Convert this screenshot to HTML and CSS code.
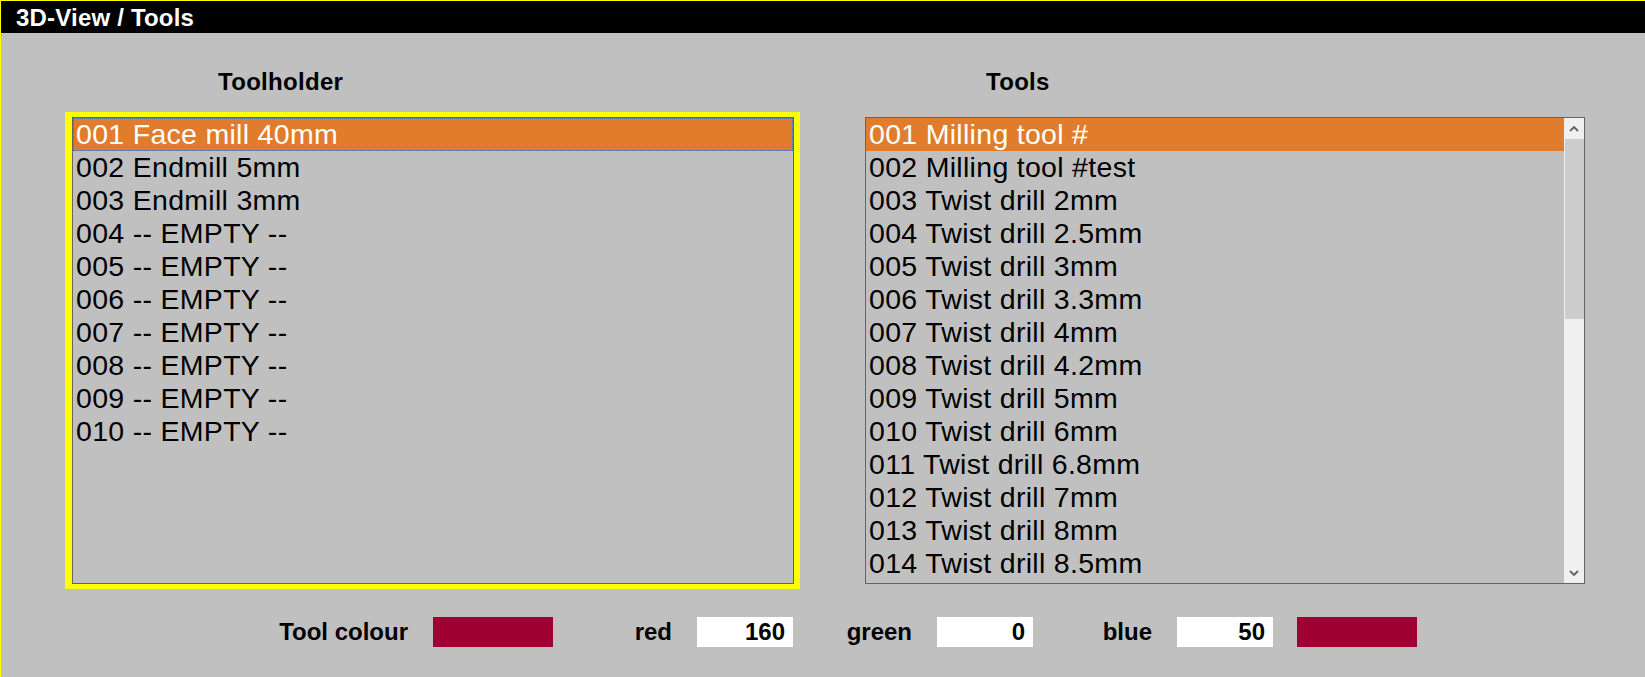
FILE: index.html
```html
<!DOCTYPE html>
<html lang="en">
<head>
<meta charset="utf-8">
<title>3D-View / Tools</title>
<link rel="stylesheet" href="styles.css">
</head>
<body>
<div class="window">
  <div class="titlebar">3D-View / Tools</div>
  <div class="content">
    <div class="columns">
      <section class="col col-holder">
        <h2 class="col-label">Toolholder</h2>
        <div class="focus-frame">
          <ul class="listbox">
            <li class="item selected focused">001 Face mill 40mm</li>
            <li class="item">002 Endmill 5mm</li>
            <li class="item">003 Endmill 3mm</li>
            <li class="item">004 -- EMPTY --</li>
            <li class="item">005 -- EMPTY --</li>
            <li class="item">006 -- EMPTY --</li>
            <li class="item">007 -- EMPTY --</li>
            <li class="item">008 -- EMPTY --</li>
            <li class="item">009 -- EMPTY --</li>
            <li class="item">010 -- EMPTY --</li>
          </ul>
        </div>
      </section>
      <section class="col col-tools">
        <h2 class="col-label">Tools</h2>
        <div class="listbox scroll-list">
          <ul class="items">
            <li class="item selected">001 Milling tool #</li>
            <li class="item">002 Milling tool #test</li>
            <li class="item">003 Twist drill 2mm</li>
            <li class="item">004 Twist drill 2.5mm</li>
            <li class="item">005 Twist drill 3mm</li>
            <li class="item">006 Twist drill 3.3mm</li>
            <li class="item">007 Twist drill 4mm</li>
            <li class="item">008 Twist drill 4.2mm</li>
            <li class="item">009 Twist drill 5mm</li>
            <li class="item">010 Twist drill 6mm</li>
            <li class="item">011 Twist drill 6.8mm</li>
            <li class="item">012 Twist drill 7mm</li>
            <li class="item">013 Twist drill 8mm</li>
            <li class="item">014 Twist drill 8.5mm</li>
          </ul>
          <div class="scrollbar">
            <div class="sb-btn">
              <svg width="10" height="6" viewBox="0 0 10 6"><polyline points="1,5 5,1 9,5" fill="none" stroke="#606060" stroke-width="1.8"/></svg>
            </div>
            <div class="sb-thumb"></div>
            <div class="sb-track"></div>
            <div class="sb-btn">
              <svg width="10" height="6" viewBox="0 0 10 6"><polyline points="1,1 5,5 9,1" fill="none" stroke="#606060" stroke-width="1.8"/></svg>
            </div>
          </div>
        </div>
      </section>
    </div>
    <div class="colour-row">
      <span class="cr-label cr-first">Tool colour</span>
      <span class="swatch"></span>
      <span class="cr-label">red</span>
      <span class="num-field">160</span>
      <span class="cr-label">green</span>
      <span class="num-field">0</span>
      <span class="cr-label">blue</span>
      <span class="num-field">50</span>
      <span class="swatch swatch-end"></span>
    </div>
  </div>
</div>
</body>
</html>
```
FILE: styles.css
```css
html, body {
  margin: 0;
  padding: 0;
  background: #c0c0c0;
}

body {
  font-family: "Liberation Sans", Arial, sans-serif;
  color: #000;
}

.window {
  height: 677px;
  box-sizing: border-box;
  border-top: 1px solid #ffff00;
  border-left: 1px solid #ffff00;
  background: #c0c0c0;
  overflow: hidden;
}

.titlebar {
  height: 32px;
  box-sizing: border-box;
  padding: 2px 0 0 15px;
  background: #000;
  color: #fff;
  font-weight: bold;
  font-size: 24px;
  letter-spacing: 0.2px;
  line-height: 30px;
}

.content {
  padding-left: 64px;
}

.columns {
  display: grid;
  grid-template-columns: 735px 720px;
  column-gap: 65px;
  align-items: start;
  margin-top: 35px;
}

.col-label {
  margin: 0 0 16px;
  font-size: 24px;
  line-height: 28px;
  font-weight: bold;
  letter-spacing: 0.3px;
}

.col-holder .col-label {
  padding-left: 153px;
}

.col-tools .col-label {
  padding-left: 121px;
  margin-bottom: 21px;
}

.focus-frame {
  border-style: solid;
  border-color: #ffff00;
  border-width: 5px 6px 5px 7px;
}

.listbox {
  margin: 0;
  padding: 0;
  list-style: none;
  height: 467px;
  box-sizing: border-box;
  border: 1px solid #646464;
  overflow: hidden;
  background: #c0c0c0;
}

.scroll-list {
  display: flex;
}

.items {
  flex: 1;
  margin: 0;
  padding: 0;
  list-style: none;
  min-width: 0;
}

.item {
  height: 33px;
  padding-left: 3px;
  font-size: 28.5px;
  line-height: 33px;
  letter-spacing: 0.3px;
  white-space: nowrap;
  color: #000;
}

.item.selected {
  background: #e07c2c;
  color: #fff;
}

.item.focused {
  outline: 1px dotted #3a6ea8;
  outline-offset: -1px;
}

.scrollbar {
  width: 20px;
  background: #f0f0f0;
  display: flex;
  flex-direction: column;
}

.sb-btn {
  height: 21px;
  display: flex;
  align-items: center;
  justify-content: center;
}

.sb-thumb {
  height: 180px;
  margin-left: 1px;
  background: #cdcdcd;
}

.sb-track {
  flex: 1;
}

.colour-row {
  display: flex;
  align-items: center;
  height: 30px;
  margin-top: 28px;
  font-size: 24px;
  line-height: 30px;
  font-weight: bold;
}

.cr-label {
  width: 144px;
  box-sizing: border-box;
  padding-right: 25px;
  text-align: right;
  white-space: nowrap;
}

.cr-label.cr-first {
  width: 368px;
}

.swatch {
  width: 120px;
  height: 30px;
  background: #a00032;
}

.swatch-end {
  margin-left: 24px;
}

.num-field {
  width: 96px;
  height: 30px;
  box-sizing: border-box;
  padding-right: 8px;
  background: #fff;
  text-align: right;
}
```
